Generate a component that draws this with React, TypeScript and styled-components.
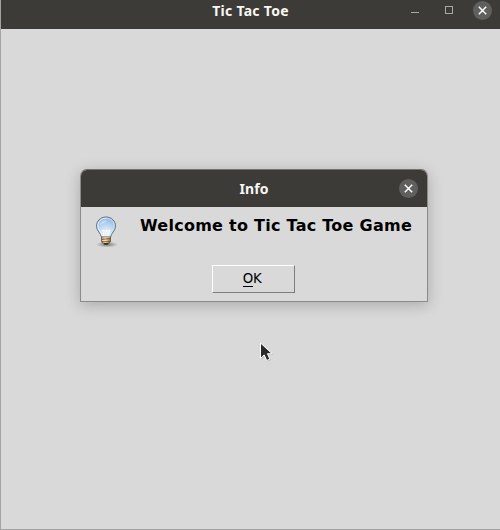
import React from "react";
import styled, { createGlobalStyle } from "styled-components";

const GlobalStyle = createGlobalStyle`
  * { box-sizing: border-box; }
  html, body { margin: 0; padding: 0; overflow: hidden; }
`;

const Desktop = styled.div`
  position: relative;
  width: 500px;
  height: 530px;
  overflow: hidden;
  background: #d9d9d9;
`;

const AppWindow = styled.main`
  display: flex;
  flex-direction: column;
  height: 530px;
  border-left: 1px solid #a3a3a3;
  border-bottom: 1px solid #a3a3a3;
`;

const MainTitleBar = styled.header`
  display: grid;
  grid-template-columns: 1fr auto 1fr;
  align-items: start;
  height: 29px;
  background: #3c3b37;
`;

const TitleText = styled.h1<{ $spacing: number }>`
  margin: 0;
  font: bold 14px/22px "Noto Sans", "Open Sans", sans-serif;
  letter-spacing: ${(p) => p.$spacing}px;
  color: #f8f7f3;
  white-space: nowrap;
`;

const Controls = styled.div`
  grid-column: 3;
  justify-self: end;
  display: flex;
  gap: 15px;
  padding: 1px 8px 0 0;
`;

const ControlButton = styled.button<{ $round?: boolean }>`
  display: block;
  width: 19px;
  height: 19px;
  padding: 0;
  border: 0;
  border-radius: 50%;
  background: ${(p) => (p.$round ? "#5f5f5e" : "transparent")};
  svg { display: block; }
`;

const Dialog = styled.section`
  position: absolute;
  left: 80px;
  top: 169px;
  width: 348px;
  height: 133px;
  border: 1px solid #8b8b8b;
  border-top-color: #73726f;
  border-radius: 7px 7px 0 0;
  background: #d9d9d9;
  box-shadow: 0 3px 15px rgba(0, 0, 0, 0.22);
`;

const DialogTitleBar = styled.header`
  display: grid;
  grid-template-columns: 1fr auto 1fr;
  align-items: center;
  height: 37px;
  padding-right: 9px;
  border-radius: 6px 6px 0 0;
  background: #3c3b37;
`;

const CloseSlot = styled.div`
  grid-column: 3;
  justify-self: end;
`;

const DialogTitle = styled(TitleText)`
  grid-column: 2;
  margin-left: 9px;
`;

const MessageRow = styled.div`
  display: flex;
  align-items: flex-start;
  height: 58px;
  padding: 9px 0 0 11px;
`;

const Message = styled.p`
  margin: 0 0 0 20px;
  font: bold 16px/19px "DejaVu Sans", sans-serif;
  letter-spacing: 0.26px;
  color: #000;
  white-space: nowrap;
`;

const Actions = styled.div`
  display: flex;
  justify-content: center;
  padding-right: 1px;
`;

const OkButton = styled.button`
  width: 83px;
  height: 28px;
  padding: 0 3px 1px 0;
  border: 1px solid;
  border-color: #fff #7d7d7d #7d7d7d #fff;
  background: #d9d9d9;
  font: 13.33px/24px "DejaVu Sans", sans-serif;
  letter-spacing: -0.4px;
  color: #000;
`;

const Mnemonic = styled.span`
  border-bottom: 1px solid #000;
`;

const Pointer = styled.svg`
  position: absolute;
  left: 258px;
  top: 341px;
`;

const CloseIcon = () => (
  <svg width="19" height="19" viewBox="0 0 19 19">
    <path d="M5.8 5.8l7.4 7.4M13.2 5.8l-7.4 7.4" stroke="#fff" strokeWidth="1.5" />
  </svg>
);

const BulbIcon = () => (
  <svg width="28" height="32" viewBox="0 0 28 32">
    <defs>
      <radialGradient id="glass" cx="50%" cy="82%" r="80%">
        <stop offset="0" stopColor="#f3f7fa" />
        <stop offset="0.45" stopColor="#c6dcf2" />
        <stop offset="1" stopColor="#8db5e5" />
      </radialGradient>
      <linearGradient id="brass" x1="0" x2="1">
        <stop offset="0" stopColor="#8c6a42" />
        <stop offset="0.42" stopColor="#f3dfb4" />
        <stop offset="0.7" stopColor="#b99159" />
        <stop offset="1" stopColor="#5c4329" />
      </linearGradient>
      <radialGradient id="ground">
        <stop offset="0" stopColor="#000" stopOpacity="0.45" />
        <stop offset="1" stopColor="#000" stopOpacity="0" />
      </radialGradient>
    </defs>
    <ellipse cx="15" cy="28.5" rx="11" ry="3" fill="url(#ground)" />
    <path
      d="M14 1C8.3 1 4.5 5.1 4.5 10.2c0 4.8 4.5 6.9 5 11.1h9c.5-4.2 5-6.3 5-11.1C23.5 5.1 19.7 1 14 1z"
      fill="url(#glass)" stroke="#66707c" strokeWidth="1"
    />
    <path d="M14 2.2c-5 0-8.2 3.4-8.2 7.9 0 3.8 3.8 6.3 4.7 10" fill="none" stroke="#f0f7ff" strokeWidth="1" />
    <path d="M14 2.2c5 0 8.2 3.4 8.2 7.9 0 3.8-3.8 6.3-4.7 10" fill="none" stroke="#d9e9fb" strokeWidth="0.8" />
    <path d="M7.5 9c1-3 3.4-4.8 7.5-4.7-2 3-4 3.1-7.5 4.7z" fill="#e4f0fd" opacity="0.5" />
    <path d="M12 20l-1.5-6 2.5 1.5 1-1.5 1.2 1.5 2.5-1.5L16 20" fill="none" stroke="#fff" strokeWidth="1" />
    <path d="M9.5 21h9v4.5l-2 2.5h-5l-2-2.5z" fill="url(#brass)" stroke="#6b5335" strokeWidth="0.7" />
    <path d="M10 22.1l7.8-.5M10 24.6l7.8-.6" stroke="#f6e5c4" strokeWidth="0.7" />
    <path d="M9.5 23.4l9-.8M9.5 25.9l9-.8" stroke="#6d5030" strokeWidth="0.7" />
    <path d="M11.5 27h5l-1 1.7h-3z" fill="#332e29" />
  </svg>
);

export default function App() {
  return (
    <Desktop>
      <GlobalStyle />
      <AppWindow>
        <MainTitleBar>
          <span />
          <TitleText $spacing={0.28}>Tic Tac Toe</TitleText>
          <Controls>
            <ControlButton aria-label="Minimize">
              <svg width="19" height="19"><path d="M6 11.5h8" stroke="#a9a8a5" /></svg>
            </ControlButton>
            <ControlButton aria-label="Maximize">
              <svg width="19" height="19"><rect x="6.5" y="5.5" width="7" height="7" fill="none" stroke="#a9a8a5" /></svg>
            </ControlButton>
            <ControlButton $round aria-label="Close"><CloseIcon /></ControlButton>
          </Controls>
        </MainTitleBar>
      </AppWindow>
      <Dialog role="dialog" aria-label="Info">
        <DialogTitleBar>
          <DialogTitle as="h2" $spacing={0.1}>Info</DialogTitle>
          <CloseSlot>
            <ControlButton $round aria-label="Close dialog"><CloseIcon /></ControlButton>
          </CloseSlot>
        </DialogTitleBar>
        <MessageRow>
          <BulbIcon />
          <Message>Welcome to Tic Tac Toe Game</Message>
        </MessageRow>
        <Actions>
          <OkButton><Mnemonic>O</Mnemonic>K</OkButton>
        </Actions>
      </Dialog>
      <Pointer width="18" height="22" viewBox="0 0 18 22">
        <path d="M2.5 2v15.3l3.7-3.4 2.5 5.6 3.2-1.4-2.5-5.4h4.7z" fill="#000" opacity="0.18" transform="translate(1 1)" />
        <path d="M2.5 2v15.3l3.7-3.4 2.5 5.6 3.2-1.4-2.5-5.4h4.7z" fill="#292929" stroke="#fff" />
      </Pointer>
    </Desktop>
  );
}
